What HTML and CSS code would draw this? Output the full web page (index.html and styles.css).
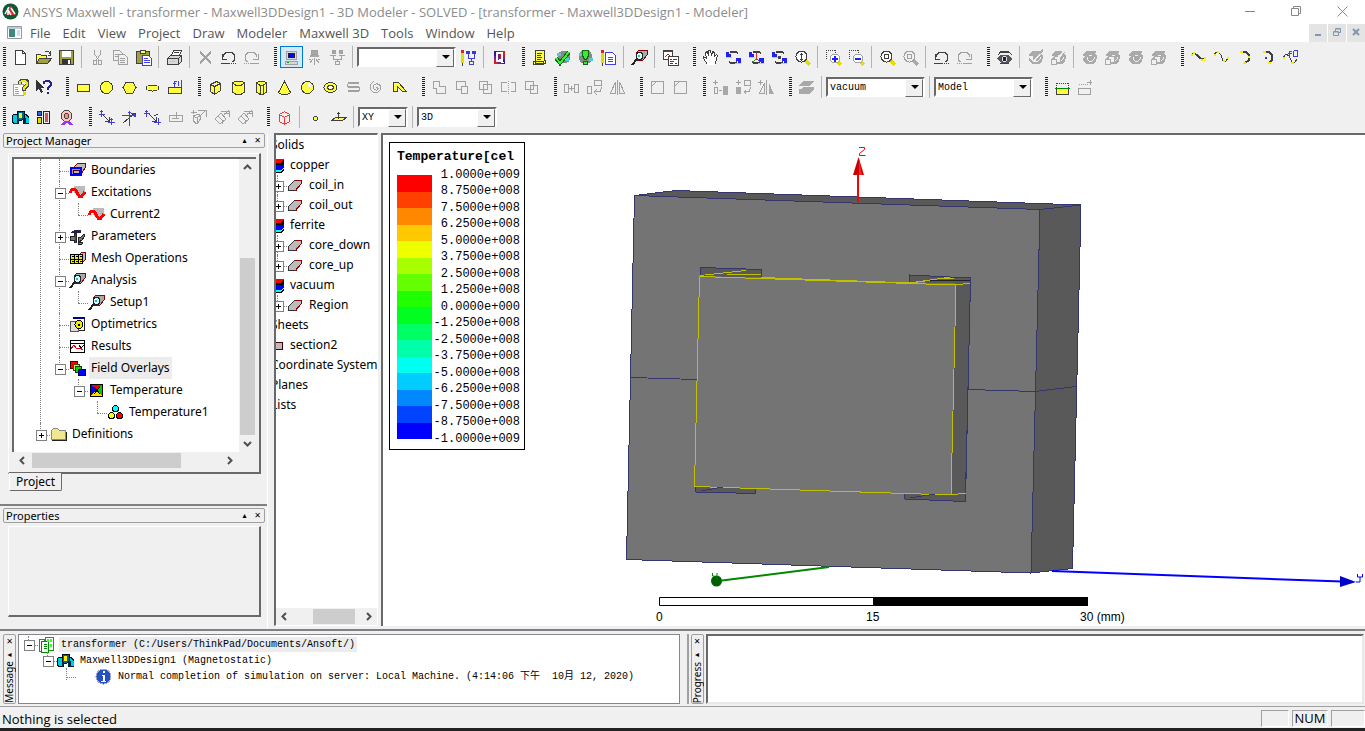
FILE: index.html
```
<!DOCTYPE html>
<html lang="en">
  <head>
    <meta charset="utf-8" />
    <title>ANSYS Maxwell</title>
    <link rel="stylesheet" href="styles.css">
  </head>
  <body>
    <svg class="sprite" aria-hidden="true">
      <defs>
        <!-- file -->
        <g id="new"><path class="w k" d="M3.500 1.500h7l3 3v11h-10zM10.500 1.500v3h3"/></g>
        <g id="open"><path class="y k" d="M1.500 14.500v-9h4l1 1h5v3M1.500 14.500l3-5h12l-4 5z"/><path class="ol k" d="M1.500 14.500l3-5h12l-4 5z"/><path class="k n" d="M9.500 2.500h4l2 3M15.500 2v4h-3"/></g>
        <g id="save"><path class="ol k" d="M1.500 1.500h14v14h-14z"/><path class="w" d="M4 2h9v6H4z"/><path d="M4 10h9v5H4z" fill="#333"/><path class="w" d="M10 11h2v4h-2z"/></g>
        <g id="cut"><path class="g n" d="M5.500 1v4l4 6M11.500 1v4l-4 6M4.500 11.500h3v4h-3zM9.500 11.500h3v4h-3z"/></g>
        <g id="copy"><path class="g l" d="M1.500 1.500h6l3 3v7h-9zM3 5.500h5M3 7.500h5"/><path class="g lo" d="M6.500 5.500h6l3 3v7h-9zM8 9.500h5M8 11.500h5M8 13.500h5"/></g>
        <g id="paste"><path class="ol k" d="M1.500 2.500h13v12h-13z"/><path class="y k" d="M5.500 1.500h5v3h-5z"/><path class="w b" d="M7.500 6.500h6l3 3v7h-9zM9 9.500h4M9 11.500h6M9 13.500h6"/></g>
        <g id="print"><path class="w k" d="M5.500 6.500l2-5h8l-2 5zM8 3.500h5"/><path class="lg k" d="M1.500 9.500l3-3h11v6l-3 3h-11zM1.500 9.500h11v6M12.500 9.500l3-3"/><path d="M4 12h5v1H4z" fill="#dd0"/></g>
        <g id="del"><path class="g n t" d="M3 2.500l11 12M14 2.500l-11 12"/></g>
        <g id="undo"><path class="k n" d="M3.500 8v-2l3-3h5l3 3v5l-2 2M2 5v5h5"/><path class="k n" d="M1 14.500h9M11 14.500h1M13 14.500h1M15 14.500h1"/></g>
        <g id="redo"><path class="g n" d="M13.500 8v-2l-3-3h-5l-3 3v5l2 2M15 5v5h-5"/><path class="g n" d="M1 14.500h1M3 14.500h1M5 14.500h1M7 14.500h9"/></g>
        <!-- run targets -->
        <g id="pc"><path class="lg g" d="M3.500 2.500h10v8h-10zM2.500 12.500h12v3h-12z"/><path d="M5 4h7v5H5z" fill="#222"/><path d="M6 5h5v3H6z" fill="#00f"/><path d="M4 13h2v1H4z" fill="#0a0"/></g>
        <g id="farm"><path class="g gf" d="M5.500 1.500h6v4h-6z"/><path class="gf" d="M4 6h9v2H4z"/><path class="g n" d="M8.500 9v7M7 10l-3 4M10 10l3 4M5 10.500h-2M12 10.500h2"/></g>
        <g id="net"><path class="g gf" d="M3.500 1.500h3v3h-3zM10.500 1.500h3v3h-3z"/><path class="g n" d="M1 6.500h6M10 6.500h6M4.500 7v3h8v-3M8.500 10v3M6.500 12.500h4v3h-4z"/></g>
        <g id="netpen"><path class="bd" d="M6 2h4v3H6zM12 2h4v3h-4z"/><path class="b n" d="M8.500 5v4h6v-4M11.500 9v3M9.500 12.500h4v3h-4z"/><path d="M1 4h3v10H1z" fill="#dd0"/><path d="M1 1h3v3H1z" fill="#d22"/><path class="k n" d="M2.500 14v3"/></g>
        <g id="queue"><path d="M3 2h11v13H3z" fill="#702090"/><path d="M9 2h5v6H9zM3 10h4v5H3z" fill="#c22"/><path d="M3 2h3v5H3zM11 11h3v4h-3z" fill="#228"/><path d="M6 4h5v8H6zM9 10l3 4" fill="none" stroke="#fff" stroke-width="2"/></g>
        <g id="list"><path class="y k" d="M4.500 1.500h9v10h1v3h-10zM2.500 12.500h10v3h-10zM6 4.500h5M6 6.500h4M6 8.500h5M6 10.500h4"/></g>
        <g id="check"><circle cx="10" cy="8" r="6.500" fill="#888"/><path d="M3 4h4v3H3zM11 9h4v3h-4z" fill="#5cc"/><path d="M2 9l4 5l9-11" fill="none" stroke="#161" stroke-width="4"/><path d="M2 9l4 5l9-11" fill="none" stroke="#3e3" stroke-width="2"/></g>
        <g id="bang"><circle cx="8.500" cy="8" r="7" fill="#888"/><path d="M2 4h3v3H2zM12 9h4v3h-4z" fill="#5cc"/><path d="M5.500 1.500h6v5l-2 4h-2l-2-4zM6.500 12.500h4v3h-4z" fill="#3e3" stroke="#161"/></g>
        <g id="notes"><path class="w b" d="M5.500 3.500h7l3 3v9h-10zM8 8.500h5M8 10.500h5M8 12.500h5"/><path d="M1 4h3v10H1z" fill="#dd0"/><path d="M1 1h3v3H1z" fill="#d22"/><path class="k n" d="M2.500 14v3"/></g>
        <g id="analyze"><path d="M5 4l3-3h8v5l-4 5H5z" fill="#aaa" stroke="#800"/><path d="M6 10l-5 6" stroke="#222" stroke-width="2"/><circle cx="8.500" cy="7" r="3.500" fill="#cff" stroke="#222"/><path d="M7 6h2v2H7z" fill="#3bb"/></g>
        <g id="report"><path class="w k" d="M1.500 1.500h9v9h-9z"/><path class="bd" d="M2 2h8v1H2z"/><path d="M3 8l3-3 3 3" fill="none" stroke="#c22"/><path class="w k" d="M6.500 7.500h10v9h-10zM8 10.500h2M11 10.500h4M8 12.500h4M8 14.500h3M13 14.500h2"/></g>
        <!-- view -->
        <g id="hand"><path class="w k" d="M5.500 15.500l-4-6v-2l3 2-1-6 2-1 1 4v-5h2l1 5 1-4 2 1v4l2-2 1 1-2 8-1 1"/></g>
        <g id="spin"><path class="k n t" d="M5 3.500l2-1h4l2 2M4 13l2 1h4l2-1"/><path d="M1 8h6v1H1z" fill="#6ef"/><path d="M1 3h3v2h2v3H1z" fill="#22e"/><path d="M10 14h6v1h-6z" fill="#6ef"/><path d="M11 9h5v5h-3v-2h-2z" fill="#22e"/></g>
        <g id="spinaxis"><use href="#spin"/><path d="M8.500 4v6" stroke="#e22"/><path d="M8.500 10l-4 3" stroke="#0a0"/><path class="b" d="M8.500 10l4 3"/></g>
        <g id="spindot"><use href="#spin"/><path d="M7 7h3v3H7z" fill="#444"/></g>
        <g id="lensud"><use href="#lens"/><path class="k n" d="M7.500 4v8M6 5.500h3M6 10.500h3"/></g>
        <g id="lens"><path d="M11 11l5 5" stroke="#e6dc00" stroke-width="3"/><circle class="w k" cx="7.500" cy="7.500" r="5.500"/></g>
        <g id="zin"><path class="k n dot" d="M1 1.500h9M1.500 1v10M10.500 1v4"/><path d="M12 12l4 4" stroke="#e6dc00" stroke-width="3"/><circle class="w g" cx="10" cy="9.500" r="4.500"/><path d="M7 9h6v2H7zM9 7h2v6H9z" fill="#22e"/></g>
        <g id="zout"><path class="k n dot" d="M1 1.500h9M1.500 1v10M10.500 1v4"/><path d="M12 12l4 4" stroke="#e6dc00" stroke-width="3"/><circle class="w g" cx="10" cy="9.500" r="4.500"/><path d="M7 9h6v2H7z" fill="#22e"/></g>
        <g id="fit"><use href="#lens"/><path class="k n" d="M5.500 5.500h4v4h-4z"/></g>
        <g id="fitoff"><path d="M11 11l5 5" stroke="#aaa" stroke-width="3"/><circle class="n g" cx="7.500" cy="7.500" r="5.500"/><path class="g n" d="M5.500 5.500h4v4h-4z"/></g>
        <g id="eye"><path class="k n" d="M2 5.500l3-2h8l3 2M3 3.500l3-1h7"/><path d="M1 9l4-3h7l4 4-4 4H5z" fill="#555"/><circle cx="8.500" cy="10" r="3" fill="#dde"/><circle cx="8.500" cy="10" r="2" fill="#124"/><path class="k n" d="M4 14.500h9"/></g>
        <g id="eyeoff"><path d="M2 5l3-3h10v2h-2l3 3-1 6-3 2H6l-4-3V9l2-2H2z" fill="#aaa"/><path d="M6 8v2l2 2h3l2-2V8M8 6.500h3" fill="none" stroke="#f0f0f0"/></g>
        <g id="eyechk"><use href="#eyeoff"/><path d="M4 8l3 3 9-10" fill="none" stroke="#f0f0f0" stroke-width="3"/><path d="M6 10l10-9" stroke="#aaa" stroke-width="2"/></g>
        <g id="eyebox"><use href="#eyeoff"/><path d="M4.500 7.500h6v6h-4M1.500 10.500h5v5h-5z" fill="#f0f0f0" stroke="#aaa"/></g>
        <g id="eyeboxchk"><use href="#eyebox"/><path d="M9 8l6-7" stroke="#f0f0f0" stroke-width="2"/></g>
        <!-- curves -->
        <g id="line"><path class="k n" d="M2 5l3-1 7 6 3-1M5 5l7 6"/><path class="yd" d="M1 5h2v2H1zM3 3h2v2H3zM11 10h2v2h-2zM14 8h2v2h-2zM14 11h2v1h-2z"/></g>
        <g id="spline"><path class="k n" d="M1 6l2-3h2l3 3 2 6h3l2-3"/><path class="yd" d="M1 5h2v2H1zM4 2h2v2H4zM10 11h2v2h-2zM14 8h2v2h-2z"/></g>
        <g id="arc3"><path class="k n t" d="M6 3h4l3 3v5l-4 3"/><path class="yd" d="M4 2h3v2H4zM12 7h2v2h-2zM7 13h3v2H7z"/></g>
        <g id="arcc"><path class="k n t" d="M6 3h4l3 3v5l-3 3"/><path class="yd" d="M4 2h3v2H4zM9 13h3v2H9z"/><path class="bd" d="M6 8h2v2H6z"/></g>
        <g id="eqcurve"><path class="k n" d="M1 9l3-4 3 2 3 6h3l2-3"/><path class="yd" d="M1 8h2v2H1zM9 13h3v2H9z"/><path class="b n" d="M7.500 9v-7h2M6 4.500h4M11.500 2v6M12 1.500h3.500v6H12"/></g>
        <!-- help -->
        <g id="help"><path class="w g" d="M1.500 5.500h10v11h-10zM3 8.500h3M3 10.500h3M3 12.500h4M3 14.500h4"/><path d="M8 5V3l2-2h4l2 2v3l-4 3v3" fill="none" stroke="#444" stroke-width="4"/><path d="M8 5V3l2-1h3l2 2v2l-3 3v2" fill="none" stroke="#ee0" stroke-width="2"/><path d="M11 13h3v3h-3z" fill="#dd0"/></g>
        <g id="whats"><path d="M1 1l8 8H6l2 4-2 1-2-4-3 2z" fill="#333"/><path d="M9 5V3l2-1h3l2 2v2l-3 3v2M13 13v2" fill="none" stroke="#229" stroke-width="2"/></g>
        <!-- primitives -->
        <g id="rect"><path class="y k" d="M2.500 5.500h12v7h-12z"/></g>
        <g id="circ"><circle class="y k" cx="8.500" cy="8.500" r="6"/></g>
        <g id="hex"><path class="y k" d="M5 3h7l3 5.500-3 5.500H5L2 8.500z"/></g>
        <g id="ell"><ellipse class="y k" cx="8.500" cy="9" rx="6.500" ry="3"/></g>
        <g id="eqsurf"><path class="y k" d="M1.500 8.500h13v6h-13z"/><path class="b n" d="M7.500 8v-6h2M6 4.500h3M11.500 2v5M14.500 1v7"/></g>
        <g id="box"><path class="y k" d="M3.500 5.500l6-3 4 2v7l-6 4-4-3zM3.500 5.500l4 2 6-3M7.500 7.500v8"/></g>
        <g id="cyl"><path class="y k" d="M2.500 4v9l3 2h6l3-2V4l-3-2h-6zM2.500 4l3 2h6l3-2"/></g>
        <g id="poly"><path class="y k" d="M3.500 4v9l3 2h4l3-2V4l-3-2h-4zM3.500 4l3 2h4l3-2M7.500 6v9M10.500 6v9"/></g>
        <g id="cone"><path class="y k" d="M8.500 2.500l6 11-3 2h-6l-3-2z"/></g>
        <g id="sph"><circle class="y k" cx="8.500" cy="8.500" r="6"/><path class="w" d="M9 4h3v4H9z"/></g>
        <g id="torus"><ellipse class="y k" cx="8.500" cy="8.500" rx="6.500" ry="5"/><ellipse class="w k" cx="8.500" cy="8.500" rx="3" ry="2"/></g>
        <g id="helix"><path class="g n t" d="M3 4h11M3 8h11M3 12h11"/><path class="g n" d="M2.500 5v3M14.500 8v4"/></g>
        <g id="spiral"><path class="g n" d="M8.500 8.500l2 1-2 2-3-2v-3l3-2 4 2v4l-3 3h-4l-3-3v-5l3-3"/></g>
        <g id="bond"><path class="y k" d="M2.500 12.500v-9h5l8 9h-4l-5-5v5z"/></g>
        <!-- booleans and edits -->
        <g id="unite"><path class="g n" d="M2.500 2.500h6v5h6v7h-9v-5h-3z"/></g>
        <g id="sub"><path class="g n" d="M7.500 10.500h-5v-8h9v5M7.500 7.500h6v7h-6z"/></g>
        <g id="inter"><path class="g n" d="M2.500 2.500h8v8h-8zM6.500 5.500h8v9h-8z"/></g>
        <g id="split"><path class="g n" d="M6.500 3.500h-5v9h5M10.500 3.500h5v9h-5"/><path class="g n dot" d="M8.500 2v13"/></g>
        <g id="impr"><path class="g n" d="M2.500 2.500h8v8h-8zM7.500 6.500h7v8h-7z"/></g>
        <g id="move"><path class="g n" d="M1.500 5.500h4v8h-4zM11.500 5.500h4v8h-4zM6 9.500h5M8.500 7v5"/></g>
        <g id="rot"><path class="g n" d="M1.500 7.500h4v7h-4zM8.500 1.500h7v5h-7zM15.500 8l-1 4-5 1M11 10l-3 3 3 3"/></g>
        <g id="mirror"><path class="g n" d="M6.500 3v11h-5zM10.500 3v11h5z"/><path class="g n" d="M8.500 1v15"/></g>
        <g id="fillet"><path class="g n" d="M2.500 14.500v-12h12v12zM2.500 7.500l5-5"/></g>
        <g id="dupmove"><path class="g n" d="M1 3.500h5M3.500 1v5M2.500 8.500h3v6h-3zM7 11.500h3"/><path class="gf" d="M11 7h5v9h-5z"/></g>
        <g id="duprot"><path class="g n" d="M1 3.500h5M3.500 1v5M9.500 1.500h6v5h-6zM15.500 8l-1 4-5 1"/><path class="gf" d="M1 8h5v7H1zM8 13l3-3v6z"/></g>
        <g id="dupmir"><path class="g n" d="M0 3.500h5M2.500 1v5M6.500 4v10h-5zM8.500 1v15"/><path class="gf" d="M11 4l5 11h-5z"/></g>
        <g id="sheets"><path class="gf" d="M5 2h11l-4 5H1zM1 10h2l2-2h11v2l-4 5H1z"/></g>
        <g id="section"><path class="k n dot" d="M3 4.500h11M2.500 4v5M14.500 4v5"/><path class="y k" d="M2.500 9.500h12v6h-12z"/><path d="M1 9.500h15" stroke="#080"/></g>
        <g id="sectadd"><path class="g n dot" d="M2 5.500h9"/><path class="g n" d="M1.500 9.500h12v6h-12zM10 3.500h5M13.500 1v5"/></g>
        <!-- solver and coordinate systems -->
        <g id="maxwell"><path d="M2 5h3v9l-3 1-2-3V7zM11 5h3l3 4v5l-3 1z" fill="#0cd" stroke="#012"/><path d="M5 2h7v7l-2 2H7L5 9z" fill="#068" stroke="#012"/><path d="M7 4h3v5H7z" fill="#fe0"/><path d="M5 10h2v5H5zM11 9h3v6h-3z" fill="#024"/></g>
        <g id="materials"><path d="M2.500 2.500h4v4h-4z" fill="#36c" stroke="#222"/><path d="M2.500 8.500h4v6h-4z" fill="#dd0" stroke="#222"/><path d="M8.500 2.500h6v12h-6z" fill="#eee" stroke="#222"/><path d="M10 4h3v9h-3z" fill="#c55"/></g>
        <g id="boundary"><circle cx="8.500" cy="7" r="5.500" fill="#fbc8b8" stroke="#444"/><circle cx="8.500" cy="7" r="2.500" fill="#f88" stroke="#444"/><path d="M2 16l4-4h5l4 4h-4l-2-2-3 2z" fill="#93f"/></g>
        <g id="cs1"><path class="k n" d="M5 6l6 6M11 8v4h-4"/><path class="b n" d="M1 5.500h6M3.500 1v7M2 2.500h3M10 13.500h7M13.500 9v7M12 10.500h3"/></g>
        <g id="cs2"><path class="k n" d="M2 14l12-10M10 4h4v4"/><path class="b n" d="M1 6.500h14M8.500 2v15M7 3.500h3M13.500 5v3"/></g>
        <g id="cs3"><path class="k n" d="M5 5l7 7M12 8v4h-4M10 7l4-2"/><path class="b n" d="M0 4.500h6M2.500 1v7M1 2.500h3M10 13.500h7M14.500 9v7"/></g>
        <g id="cs4"><path class="g n" d="M2.500 6.500h13v6h-13zM9.500 3v6M5 9.500h7"/></g>
        <g id="cs5"><path class="g n" d="M1 3.500h6M3.500 1v4M8 1.500h8v6M16 1l-6 6M3 7l6-2 2 4-4 6-4-3zM3 7l4 2 4-3M7 9v6"/></g>
        <g id="cs6"><path class="g n" d="M8 2h8v6M16 1l-6 6M2 10l6-6 5 6-6 5-5-5M5 7l4 4v4M16 4h-5"/></g>
        <g id="redbox"><path d="M3.500 5.500l5-3 5 3v7l-5 3-5-3zM3.500 5.500l5 3 5-3M8.500 8v7" fill="none" stroke="#f33"/></g>
        <g id="point"><path class="y k" d="M6.500 8.500l1-1h2l1 1v2l-1 1h-2l-1-1z"/></g>
        <g id="plane"><path class="y k" d="M1.500 11.500l4-3h11l-4 3zM8.500 10v-7M7 4.500h3"/></g>
        <!-- tree -->
        <g id="t-bound"><path d="M5 5l4-4h7v5l-4 6" fill="#bbb" stroke="#800"/><path d="M2 6h10v7H2z" fill="#c88" stroke="#00f" stroke-width="2"/><path d="M4 8h6v3H4z" fill="#bbb" stroke="#400"/></g>
        <g id="t-exc"><path d="M5 2h11v8l-4 4-7-5z" fill="#bbb"/><path d="M1 9l2-4h3l4 7h3l3-4" fill="none" stroke="#f00" stroke-width="3"/></g>
        <g id="t-param"><path d="M2 4l4-2h6v3H8v10H5V5H2z" fill="#224"/><path d="M1 8h6v4H1zM9 9h3l3-3 1 2-3 4-3 2 4 1-1 1H9z" fill="#777" stroke="#222"/><path d="M6 6h1v9H6z" fill="#33c"/></g>
        <g id="t-mesh"><path d="M10 5l3-3h3v8l-3 3" fill="#bbb" stroke="#800"/><path d="M1.500 4.500h12v9h-12z" fill="#ee0" stroke="#000"/><path d="M5.500 4v9M9.500 4v9M2 9.500h11M3 6h1v1M7 6h1v1M11 6h1v1M3 11h1v1M7 11h1v1M11 11h1v1" fill="none" stroke="#000"/></g>
        <g id="t-opt"><path d="M4 1.500h11.500v13H8" fill="#fff" stroke="#222"/><path d="M4 1h12v2H4z" fill="#008"/><path d="M1.500 5.500h8v10h-8z" fill="#ddd" stroke="#555"/><circle cx="10" cy="8.500" r="4" fill="#ee0" stroke="#000"/><path d="M9 8h2v2H9z"/></g>
        <g id="t-res"><path d="M1.500 2.500h14v12h-14z" fill="#fff" stroke="#000"/><path d="M2 5.500h13" stroke="#000"/><path d="M2 11l3-4 3 4 3-1 3 2" fill="none" stroke="#d00"/><path d="M10 7l2 3 3-3" fill="none" stroke="#000"/></g>
        <g id="t-field"><path d="M1.500 1.500h7v7h-7z" fill="#f00" stroke="#400"/><path d="M4.500 4.500h6v6h-6z" fill="#ee0" stroke="#440"/><path d="M6.500 6.500h6v6h-6z" fill="#0d0" stroke="#040"/><path d="M9.500 9.500h7v6h-7z" fill="#00f" stroke="#004"/></g>
        <g id="t-temp"><path d="M3 3h11v11H3z" fill="#00f"/><path d="M3 3h11l-5 5z" fill="#f00"/><path d="M14 3v11L8 8z" fill="#0c0"/><path d="M3 14h11L8 8z" fill="#fd0"/><path d="M2.500 2.500h12v12h-12zM6 5l6 7M12 5l-6 7" fill="none" stroke="#000"/></g>
        <g id="t-plot"><g stroke="#000"><circle cx="8.500" cy="4.500" r="3" fill="#0ff"/><circle cx="4.500" cy="11.500" r="3" fill="#ff0"/><circle cx="12.500" cy="11.500" r="3" fill="#f00"/></g></g>
        <g id="t-dir"><path d="M1.500 13.500v-9l2-2h4l2 2h6v9z" fill="#f0e890" stroke="#888"/><path d="M2 14.500h14.500V6" fill="none" stroke="#222"/></g>
        <g id="t-mat"><path d="M4 2h12v3l-3 3H1V6z" fill="#000"/><path d="M4 2h12l-4 4H1z" fill="#f00"/><path d="M1 8h12l3-1v3l-3 3H1z" fill="#00f"/><path d="M13 8l3-2M1 7.500h12M1 15.500h12l3-3" fill="none" stroke="#000"/><path d="M1 13h12v2H1z" fill="#0ff"/></g>
        <g id="t-solid"><path d="M1.500 9.500l6-6h7v3l-6 7h-7z" fill="#bbb" stroke="#333"/><path d="M8 3.500h6.500v3l-5 5v2" fill="none" stroke="#800"/></g>
        <g id="t-sheet"><path d="M4.500 5.500h10v7h-10z" fill="#bbb" stroke="#400"/></g>
        <g id="t-proj"><path d="M7.500 1.500h8v13h-8zM1.500 3.500h5v12h-5z" fill="#fff" stroke="#0a0"/><path d="M3.500 5.500h7v11h-7zM6 8.500h3M6 10.500h3M6 12.500h3" fill="#fff" stroke="#080"/><path d="M9 3h2v3H9zM12 3h2v3h-2zM12 8h2v3h-2z" fill="#3f3"/></g>
      </defs>
    </svg>

    <header class="titlebar">
      <svg class="logo" viewBox="0 0 17 17"><circle cx="8.500" cy="8.500" r="8" fill="#0a5a32"/><path d="M4 12l4-9 2 1 4 8" fill="#c33"/><path d="M3 11l4-7M6 12V7l3 5M9 5l4 6" stroke="#fff" stroke-width="1.500" fill="none"/></svg>
      <h1>ANSYS Maxwell - transformer - Maxwell3DDesign1 - 3D Modeler - SOLVED - [transformer - Maxwell3DDesign1 - Modeler]</h1>
      <div class="caption">
        <button title="Minimize"><svg viewBox="0 0 11 11"><path d="M0 5.500h10"/></svg></button>
        <button title="Restore"><svg viewBox="0 0 11 11"><path d="M.5 2.500h7v7h-7zM2.500 2v-1.500h7v7H8"/></svg></button>
        <button title="Close"><svg viewBox="0 0 11 11"><path d="M.5.500l10 10M10.500.500l-10 10"/></svg></button>
      </div>
    </header>

    <nav class="menubar">
      <svg class="docicon" viewBox="0 0 15 13"><path d="M.5.500h14v12H.5z" fill="#fff" stroke="#999"/><path d="M1 1h13v2H1z" fill="#bcd"/><path d="M2 3h6v8H2z" fill="#3a8a80"/><path d="M10 4h3v6h-3z" fill="#cde"/></svg>
      <button>File</button>
      <button>Edit</button>
      <button>View</button>
      <button>Project</button>
      <button>Draw</button>
      <button>Modeler</button>
      <button>Maxwell 3D</button>
      <button>Tools</button>
      <button>Window</button>
      <button>Help</button>
      <div class="mdi">
        <button title="Minimize"><svg viewBox="0 0 9 9"><path d="M1 7h6"/></svg></button>
        <button title="Restore"><svg class="thin" viewBox="0 0 9 9"><path d="M.5 3.500h5v4h-5zM2.500 3V.500h5v4H6M1 4h4M3 1h5"/></svg></button>
        <button title="Close"><svg viewBox="0 0 9 9"><path d="M1 1l6 6M7 1l-6 6"/></svg></button>
      </div>
    </nav>

    <div class="toolbars">
      <div class="bar-row">
        <div class="bar">
          <button title="New"><svg><use href="#new"/></svg></button>
          <button title="Open"><svg><use href="#open"/></svg></button>
          <button title="Save"><svg><use href="#save"/></svg></button>
          <i></i>
          <button title="Cut"><svg><use href="#cut"/></svg></button>
          <button title="Copy"><svg><use href="#copy"/></svg></button>
          <button title="Paste"><svg><use href="#paste"/></svg></button>
          <i></i>
          <button title="Print"><svg><use href="#print"/></svg></button>
          <i></i>
          <button title="Delete"><svg><use href="#del"/></svg></button>
          <button title="Undo"><svg><use href="#undo"/></svg></button>
          <button title="Redo"><svg><use href="#redo"/></svg></button>
        </div>
        <div class="bar">
          <button class="on" title="Local"><svg><use href="#pc"/></svg></button>
          <button title="Remote"><svg><use href="#farm"/></svg></button>
          <button title="Distributed"><svg><use href="#net"/></svg></button>
          <i></i>
          <span class="combo"><select aria-label="Machine"><option></option></select></span>
          <button title="Edit machines"><svg><use href="#netpen"/></svg></button>
          <i></i>
          <button title="Queue"><svg><use href="#queue"/></svg></button>
        </div>
        <div class="bar">
          <button title="List"><svg><use href="#list"/></svg></button>
          <button title="Validate"><svg><use href="#check"/></svg></button>
          <button title="Analyze all"><svg><use href="#bang"/></svg></button>
          <button title="Edit notes"><svg><use href="#notes"/></svg></button>
          <i></i>
          <button title="Solution data"><svg><use href="#analyze"/></svg></button>
          <i></i>
          <button title="Copy report"><svg><use href="#report"/></svg></button>
        </div>
        <div class="bar">
          <button title="Pan"><svg><use href="#hand"/></svg></button>
          <button title="Rotate"><svg><use href="#spin"/></svg></button>
          <button title="Rotate about axis"><svg><use href="#spinaxis"/></svg></button>
          <button title="Rotate about center"><svg><use href="#spindot"/></svg></button>
          <button title="Zoom"><svg><use href="#lensud"/></svg></button>
          <i></i>
          <button title="Zoom in"><svg><use href="#zin"/></svg></button>
          <button title="Zoom out"><svg><use href="#zout"/></svg></button>
          <i></i>
          <button title="Fit all"><svg><use href="#fit"/></svg></button>
          <button title="Fit selection"><svg><use href="#fitoff"/></svg></button>
          <i></i>
          <button title="Undo view"><svg><use href="#undo"/></svg></button>
          <button title="Redo view"><svg><use href="#redo"/></svg></button>
        </div>
        <div class="bar">
          <button title="Visibility"><svg><use href="#eye"/></svg></button>
          <i></i>
          <button title="Hide selection"><svg><use href="#eyechk"/></svg></button>
          <button title="Hide in view"><svg><use href="#eyeboxchk"/></svg></button>
          <i></i>
          <button title="Show selection"><svg><use href="#eyeoff"/></svg></button>
          <button title="Show in view"><svg><use href="#eyebox"/></svg></button>
          <button title="Show all"><svg><use href="#eyeoff"/></svg></button>
          <button title="Show all in view"><svg><use href="#eyebox"/></svg></button>
        </div>
        <div class="bar">
          <button title="Line"><svg><use href="#line"/></svg></button>
          <button title="Spline"><svg><use href="#spline"/></svg></button>
          <button title="3 point arc"><svg><use href="#arc3"/></svg></button>
          <button title="Center point arc"><svg><use href="#arcc"/></svg></button>
          <button title="Equation curve"><svg><use href="#eqcurve"/></svg></button>
        </div>
      </div>

      <div class="bar-row">
        <div class="bar">
          <button title="Help"><svg><use href="#help"/></svg></button>
          <button title="What's this"><svg><use href="#whats"/></svg></button>
        </div>
        <div class="bar">
          <button title="Rectangle"><svg><use href="#rect"/></svg></button>
          <button title="Circle"><svg><use href="#circ"/></svg></button>
          <button title="Polygon"><svg><use href="#hex"/></svg></button>
          <button title="Ellipse"><svg><use href="#ell"/></svg></button>
          <button title="Equation surface"><svg><use href="#eqsurf"/></svg></button>
        </div>
        <div class="bar">
          <button title="Box"><svg><use href="#box"/></svg></button>
          <button title="Cylinder"><svg><use href="#cyl"/></svg></button>
          <button title="Polyhedron"><svg><use href="#poly"/></svg></button>
          <button title="Cone"><svg><use href="#cone"/></svg></button>
          <button title="Sphere"><svg><use href="#sph"/></svg></button>
          <button title="Torus"><svg><use href="#torus"/></svg></button>
          <button title="Helix"><svg><use href="#helix"/></svg></button>
          <button title="Spiral"><svg><use href="#spiral"/></svg></button>
          <button title="Bondwire"><svg><use href="#bond"/></svg></button>
        </div>
        <div class="bar">
          <button title="Unite"><svg><use href="#unite"/></svg></button>
          <button title="Subtract"><svg><use href="#sub"/></svg></button>
          <button title="Intersect"><svg><use href="#inter"/></svg></button>
          <button title="Split"><svg><use href="#split"/></svg></button>
          <button title="Imprint"><svg><use href="#impr"/></svg></button>
        </div>
        <div class="bar">
          <button title="Move"><svg><use href="#move"/></svg></button>
          <button title="Rotate object"><svg><use href="#rot"/></svg></button>
          <button title="Mirror"><svg><use href="#mirror"/></svg></button>
        </div>
        <div class="bar">
          <button title="Fillet"><svg><use href="#fillet"/></svg></button>
          <button title="Chamfer"><svg><use href="#fillet"/></svg></button>
        </div>
        <div class="bar">
          <button title="Duplicate along line"><svg><use href="#dupmove"/></svg></button>
          <button title="Duplicate around axis"><svg><use href="#duprot"/></svg></button>
          <button title="Duplicate mirror"><svg><use href="#dupmir"/></svg></button>
        </div>
        <div class="bar">
          <button title="Thicken sheet"><svg><use href="#sheets"/></svg></button>
          <i></i>
          <span class="combo"><select aria-label="Material"><option>vacuum</option></select></span>
          <i></i>
          <span class="combo"><select aria-label="Selection"><option>Model</option></select></span>
        </div>
        <div class="bar">
          <button title="Section"><svg><use href="#section"/></svg></button>
          <button title="Add section"><svg><use href="#sectadd"/></svg></button>
        </div>
      </div>

      <div class="bar-row">
        <div class="bar">
          <button title="Maxwell 3D"><svg><use href="#maxwell"/></svg></button>
          <button title="Materials"><svg><use href="#materials"/></svg></button>
          <button title="Boundaries"><svg><use href="#boundary"/></svg></button>
        </div>
        <div class="bar">
          <button title="Relative CS offset"><svg><use href="#cs1"/></svg></button>
          <button title="Relative CS rotated"><svg><use href="#cs2"/></svg></button>
          <button title="Relative CS both"><svg><use href="#cs3"/></svg></button>
          <button title="Face CS"><svg><use href="#cs4"/></svg></button>
          <button title="Object CS offset"><svg><use href="#cs5"/></svg></button>
          <button title="Object CS rotated"><svg><use href="#cs6"/></svg></button>
          <button title="Object CS both"><svg><use href="#cs6"/></svg></button>
        </div>
        <div class="bar">
          <button title="Region"><svg><use href="#redbox"/></svg></button>
          <i></i>
          <button title="Point"><svg><use href="#point"/></svg></button>
          <button title="Plane"><svg><use href="#plane"/></svg></button>
          <i></i>
          <span class="combo plane"><select aria-label="Drawing plane"><option>XY</option></select></span>
          <i></i>
          <span class="combo mode"><select aria-label="Movement mode"><option>3D</option></select></span>
        </div>
      </div>
    </div>

    <main>
      <aside>
        <section class="panel project">
          <h2>Project Manager <button title="Hide">&#9652;</button><button title="Close">&#10005;</button></h2>
          <div class="frame">
            <div class="scroller">
              <ul class="tree">
                <li>
                  <ul>
                    <li><div><b></b><svg><use href="#t-bound"/></svg><span>Boundaries</span></div></li>
                    <li><div><b class="minus"></b><svg><use href="#t-exc"/></svg><span>Excitations</span></div>
                      <ul>
                        <li><div><b></b><svg><use href="#t-exc"/></svg><span>Current2</span></div></li>
                      </ul>
                    </li>
                    <li><div><b class="plus"></b><svg><use href="#t-param"/></svg><span>Parameters</span></div></li>
                    <li><div><b></b><svg><use href="#t-mesh"/></svg><span>Mesh Operations</span></div></li>
                    <li><div><b class="minus"></b><svg><use href="#analyze"/></svg><span>Analysis</span></div>
                      <ul>
                        <li><div><b></b><svg><use href="#analyze"/></svg><span>Setup1</span></div></li>
                      </ul>
                    </li>
                    <li><div><b></b><svg><use href="#t-opt"/></svg><span>Optimetrics</span></div></li>
                    <li><div><b></b><svg><use href="#t-res"/></svg><span>Results</span></div></li>
                    <li><div><b class="minus"></b><svg><use href="#t-field"/></svg><span class="sel">Field Overlays</span></div>
                      <ul>
                        <li><div><b class="minus"></b><svg><use href="#t-temp"/></svg><span>Temperature</span></div>
                          <ul>
                            <li><div><b></b><svg><use href="#t-plot"/></svg><span>Temperature1</span></div></li>
                          </ul>
                        </li>
                      </ul>
                    </li>
                  </ul>
                </li>
                <li><div><b class="plus"></b><svg><use href="#t-dir"/></svg><span>Definitions</span></div></li>
              </ul>
              <div class="vbar">
                <svg viewBox="0 0 9 9"><path d="M1 6l3.500-3.500L8 6"/></svg>
                <div class="thumb"></div>
                <svg viewBox="0 0 9 9"><path d="M1 3l3.500 3.500L8 3"/></svg>
              </div>
            </div>
            <div class="hbar">
              <svg viewBox="0 0 9 9"><path d="M6 1L2.500 4.500L6 8"/></svg>
              <div class="track"><div class="thumb"></div></div>
              <svg viewBox="0 0 9 9"><path d="M3 1l3.500 3.500L3 8"/></svg>
            </div>
          </div>
          <button class="tab">Project</button>
        </section>
        <section class="panel props">
          <h2>Properties <button title="Hide">&#9652;</button><button title="Close">&#10005;</button></h2>
          <div class="frame"></div>
        </section>
      </aside>

      <div class="model-tree">
        <ul class="tree">
          <li><div><b></b><svg></svg><span>Solids</span></div>
            <ul>
              <li><div><b class="minus"></b><svg><use href="#t-mat"/></svg><span>copper</span></div>
                <ul>
                  <li><div><b class="plus"></b><svg><use href="#t-solid"/></svg><span>coil_in</span></div></li>
                  <li><div><b class="plus"></b><svg><use href="#t-solid"/></svg><span>coil_out</span></div></li>
                </ul>
              </li>
              <li><div><b class="minus"></b><svg><use href="#t-mat"/></svg><span>ferrite</span></div>
                <ul>
                  <li><div><b class="plus"></b><svg><use href="#t-solid"/></svg><span>core_down</span></div></li>
                  <li><div><b class="plus"></b><svg><use href="#t-solid"/></svg><span>core_up</span></div></li>
                </ul>
              </li>
              <li><div><b class="minus"></b><svg><use href="#t-mat"/></svg><span>vacuum</span></div>
                <ul>
                  <li><div><b class="plus"></b><svg><use href="#t-solid"/></svg><span>Region</span></div></li>
                </ul>
              </li>
            </ul>
          </li>
          <li><div><b></b><svg></svg><span>Sheets</span></div>
            <ul>
              <li><div><b></b><svg><use href="#t-sheet"/></svg><span>section2</span></div></li>
            </ul>
          </li>
          <li><div><b></b><svg></svg><span>Coordinate Systems</span></div></li>
          <li><div><b></b><svg></svg><span>Planes</span></div></li>
          <li><div><b></b><svg></svg><span>Lists</span></div></li>
        </ul>
        <div class="hbar">
          <svg viewBox="0 0 9 9"><path d="M6 1L2.500 4.500L6 8"/></svg>
          <div class="track"><div class="thumb"></div></div>
          <svg viewBox="0 0 9 9"><path d="M3 1l3.500 3.500L3 8"/></svg>
        </div>
      </div>

      <div class="view">
        <svg class="scene" viewBox="383 135 982 490" preserveAspectRatio="xMinYMin meet">
          <!-- core -->
          <path class="side edge" d="M634.500 195.500L676 190.500L1081 205L1040 209.500z"/>
          <path class="side edge" d="M1040 209.500L1081 205L1072.500 568.500L1031 573z"/>
          <path class="front edge" d="M634.500 195.500L1040 209.500L1031 573L626.500 559.500z"/>
          <path class="edge" d="M630.500 377.500L697 379.500M968 389.500L1035 391.500L1076 386.500"/>
          <!-- window and coil -->
          <path class="side edge" d="M700.500 276v-8.500l61 2v8M909.500 282v-7l61 3v6"/>
          <path class="side edge" d="M970.500 278L965.500 501.500L904.500 499v-9M695.500 486v6l60 1.500v-6"/>
          <path class="side" d="M956 285l14-2-5 211-14 2z"/>
          <path class="front coil" d="M699.500 276.500L956 285L951 495L694.500 486.500z"/>
          <path class="coil" d="M700 275.500L746 270.500M727 274h34M761 277.500L912 283M912 283l38-6M956 285l14-2M951 495l15-2M909 283l35-5h10"/>
          <path d="M930 280.500h40" stroke="#222"/>
          <path class="edge" d="M970.500 282L965.500 493M701 491l22-4M910 498l25-4"/>
          <!-- axes -->
          <path d="M858 202V172" stroke="#f00" stroke-width="2"/>
          <path d="M858.500 157l5.500 18h-11z" fill="#c00"/><path d="M859 159l3 16h-3z" fill="#f22"/>
          <path d="M859 147.500h5.500v2l-5 4v2h6" fill="none" stroke="#f00"/>
          <path d="M722 580.500L829 567" stroke="#080" stroke-width="2"/>
          <circle cx="716.500" cy="581" r="5.500" fill="#005f00"/><path d="M712.500 573v3h2M717 573v6" stroke="#080" fill="none"/>
          <path d="M1052 571L1342 581.500" stroke="#00f" stroke-width="2"/>
          <path d="M1340 576l16 6-16 5z" fill="#00c"/><path d="M1357.500 574v3h5v-3M1360 577v5h-4" stroke="#00f" fill="none"/>
          <!-- scale -->
          <path d="M659.500 597.500h428v8h-428z" fill="#fff" stroke="#000"/>
          <path d="M873 597h215v9H873z"/>
          <text x="656" y="621">0</text><text x="866" y="621">15</text><text x="1080" y="621">30 (mm)</text>
        </svg>
        <div class="legend">
          <h3>Temperature[cel</h3>
          <div class="scale">
            <div class="swatches">
              <i style="background: #f00"></i>
              <i style="background: #ff4000"></i>
              <i style="background: #ff8800"></i>
              <i style="background: #ffc800"></i>
              <i style="background: #f0ff00"></i>
              <i style="background: #a8ff00"></i>
              <i style="background: #64ff00"></i>
              <i style="background: #20ff00"></i>
              <i style="background: #00ff20"></i>
              <i style="background: #00ff64"></i>
              <i style="background: #00ffa8"></i>
              <i style="background: #00fff0"></i>
              <i style="background: #00ccff"></i>
              <i style="background: #0088ff"></i>
              <i style="background: #0044ff"></i>
              <i style="background: #00f"></i>
            </div>
            <ol>
              <li>1.0000e+009</li>
              <li>8.7500e+008</li>
              <li>7.5000e+008</li>
              <li>6.2500e+008</li>
              <li>5.0000e+008</li>
              <li>3.7500e+008</li>
              <li>2.5000e+008</li>
              <li>1.2500e+008</li>
              <li>0.0000e+000</li>
              <li>-1.2500e+008</li>
              <li>-2.5000e+008</li>
              <li>-3.7500e+008</li>
              <li>-5.0000e+008</li>
              <li>-6.2500e+008</li>
              <li>-7.5000e+008</li>
              <li>-8.7500e+008</li>
              <li>-1.0000e+009</li>
            </ol>
          </div>
        </div>
      </div>
    </main>

    <div class="docks">
      <section class="dock">
        <h2><button title="Close">&#10005;</button><button title="Hide">&#9666;</button><span>Message</span></h2>
        <div class="messages">
          <ul class="tree">
            <li><div><b class="minus"></b><svg><use href="#t-proj"/></svg><span class="sel">transformer (C:/Users/ThinkPad/Documents/Ansoft/)</span></div>
              <ul>
                <li><div><b class="minus"></b><svg><use href="#maxwell"/></svg><span>Maxwell3DDesign1 (Magnetostatic)</span></div>
                  <ul>
                    <li class="info"><div><b></b><svg viewBox="0 0 17 17"><circle cx="8.500" cy="8.500" r="7.500" fill="#2450c0" stroke="#aab"/><path d="M7.500 3h2v2h-2zM7 7h3v6h1v1H6v-1h1.500V8H7z" fill="#fff"/></svg><span>Normal completion of simulation on server: Local Machine. (4:14:06 下午&nbsp; 10月 12, 2020)</span></div></li>
                  </ul>
                </li>
              </ul>
            </li>
          </ul>
        </div>
      </section>
      <section class="dock">
        <h2><button title="Close">&#10005;</button><button title="Hide">&#9666;</button><span>Progress</span></h2>
        <div class="progress"></div>
      </section>
    </div>

    <footer>
      <span>Nothing is selected</span>
      <div class="cell"></div>
      <div class="cell num">NUM</div>
      <div class="cell last"></div>
    </footer>
  </body>
</html>
```
FILE: styles.css
```
* {
  box-sizing: border-box;
}

body {
  margin: 0;
  height: 100vh;
  display: flex;
  flex-direction: column;
  overflow: hidden;
  background-color: #f0f0f0;
  font: 12px/16px "Noto Sans", "Noto Sans CJK SC", sans-serif;
  color: #000;
}

h1,
h2,
h3,
ul,
ol {
  margin: 0;
  padding: 0;
  font-weight: normal;
  list-style: none;
}

button {
  margin: 0;
  padding: 0;
  border: none;
  background: none;
  font: inherit;
  color: inherit;
}

.sprite {
  position: absolute;
  width: 0;
  height: 0;
}

/* icon paints */
.k { stroke: #404040; }
.g { stroke: #a0a0a0; }
.b { stroke: #4040e0; }
.w { fill: #fff; }
.y { fill: #ffff40; }
.yd { fill: #f4f000; }
.bd { fill: #3838d8; }
.ol { fill: #a0a040; }
.lg { fill: #d8d8d8; }
.lo { fill: #f0f0f0; }
.gf { fill: #a8a8a8; }
.n, .l { fill: none; }
.t { stroke-width: 2; }
.dot { stroke-dasharray: 1 1; }

/* title and menu */
.titlebar {
  display: flex;
  align-items: center;
  height: 23px;
  padding-left: 2px;
  background-color: #fff;
}

.logo {
  width: 17px;
  height: 17px;
  margin-right: 4px;
}

h1 {
  flex: 1;
  font: 13px/16px "Open Sans", sans-serif;
  color: #8c8c8c;
  white-space: nowrap;
}

.caption {
  display: flex;
}

.caption button {
  width: 46px;
  height: 20px;
}

.caption svg {
  display: block;
  width: 11px;
  height: 11px;
  margin: auto;
  fill: none;
  stroke: #888;
}

.menubar {
  display: flex;
  align-items: center;
  height: 19px;
  padding-left: 7px;
  background-color: #fff;
  font: 13px/16px "Open Sans", sans-serif;
  color: #555;
}

.menubar > button {
  padding: 0 6px;
}

.docicon {
  width: 15px;
  height: 13px;
  margin-right: 2px;
}

.mdi {
  display: flex;
  gap: 1px;
  margin-left: auto;
}

.mdi button {
  width: 18px;
  height: 18px;
  background-color: #e4e4e4;
}

.mdi svg {
  display: block;
  width: 9px;
  height: 9px;
  margin: auto;
  fill: none;
  stroke: #8496ac;
  stroke-width: 2;
}

.mdi svg.thin {
  stroke-width: 1;
}

/* toolbars */
.toolbars {
  height: 91px;
  padding-bottom: 1px;
}

.bar-row {
  display: flex;
  gap: 11px;
  height: 30px;
  padding-left: 3px;
}

.bar {
  display: flex;
  align-items: center;
}

.bar::before {
  content: "";
  width: 3px;
  height: 20px;
  margin-right: 3px;
  background: repeating-linear-gradient(#222 0 1px, #f0f0f0 1px 2px);
}

.bar button {
  width: 23px;
  height: 22px;
}

.bar button.on {
  border: 1px solid #0078d7;
  background-color: #d4e8f8;
}

.bar button svg,
.tree svg {
  display: block;
  width: 17px;
  height: 17px;
  margin: auto;
  shape-rendering: crispEdges;
}

.bar i {
  width: 1px;
  height: 22px;
  margin: 0 4px 0 3px;
  background-color: #b4b4b4;
}

.combo {
  position: relative;
  width: 99px;
  margin-right: 1px;
}

.combo.plane {
  width: 50px;
}

.combo.mode {
  width: 80px;
}

.combo select {
  display: block;
  appearance: none;
  width: 100%;
  height: 20px;
  padding: 0 2px;
  border: 2px solid #696969;
  border-right-color: #fff;
  border-bottom-color: #fff;
  border-radius: 0;
  background-color: #fff;
  font: 10px "Liberation Mono", monospace;
  color: #000;
}

.combo::before,
.combo::after {
  content: "";
  position: absolute;
  pointer-events: none;
}

.combo::before {
  top: 2px;
  right: 2px;
  width: 16px;
  height: 16px;
  border: 1px solid #fff;
  border-right-color: #696969;
  border-bottom-color: #696969;
  background-color: #f0f0f0;
}

.combo::after {
  top: 8px;
  right: 6px;
  border: 4px solid transparent;
  border-top-color: #000;
  border-bottom: none;
}

/* workspace */
main {
  flex: 1;
  min-height: 0;
  display: flex;
}

aside {
  display: flex;
  flex-direction: column;
  width: 268px;
  margin-right: 6px;
  border-right: 1px solid #fff;
}

.panel {
  display: flex;
  flex-direction: column;
  padding: 0 2px 0 3px;
}

.project {
  flex: 1;
  min-height: 0;
  border-bottom: 2px solid #808080;
}

.props {
  height: 123px;
  padding-top: 2px;
  padding-bottom: 12px;
}

.panel h2 {
  display: flex;
  flex: none;
  align-items: center;
  height: 15px;
  padding-left: 2px;
  border: 1px solid #a0a0a0;
  border-radius: 2px;
  font-size: 11px;
  line-height: 12px;
}

.panel h2 button {
  width: 13px;
  font: bold 8px "DejaVu Sans", sans-serif;
}

.panel h2 button:first-of-type {
  margin-left: auto;
}

.frame {
  flex: 1;
  display: flex;
  flex-direction: column;
  min-height: 0;
  margin: 5px 4px 0 5px;
  border: 1px solid #fff;
  border-right: 2px solid #696969;
  border-bottom: 2px solid #696969;
}

.project .frame {
  padding: 3px;
}

.props .frame {
  margin-top: 3px;
}

.scroller {
  flex: 1;
  display: flex;
  min-height: 0;
  border-top: 2px solid #696969;
  border-left: 2px solid #696969;
  background-color: #fff;
}

.scroller .tree {
  flex: 1;
  padding-left: 17px;
}

.tab {
  align-self: flex-start;
  height: 18px;
  margin: -1px 0 13px 6px;
  padding: 0 6px;
  border: 1px solid #696969;
  border-top: none;
  border-left-color: #fff;
  border-radius: 0 0 2px 2px;
  background-color: #f0f0f0;
}

.vbar,
.hbar {
  display: flex;
  background-color: #f0f0f0;
}

.vbar {
  flex-direction: column;
  align-items: center;
  width: 17px;
  padding: 4px 1px;
}

.hbar {
  align-items: center;
  height: 17px;
  padding: 0 4px;
}

.vbar svg,
.hbar svg {
  width: 9px;
  height: 9px;
  fill: none;
  stroke: #505050;
  stroke-width: 2;
}

.vbar .thumb {
  width: 15px;
  flex: 1;
  margin: 86px 0 4px;
  background-color: #cdcdcd;
}

.hbar .track {
  flex: 1;
  margin: 0 5px;
}

.hbar .thumb {
  width: 79%;
  height: 15px;
  background-color: #cdcdcd;
}

.project .hbar {
  padding: 0 22px 0 6px;
}

/* trees */
.tree li {
  position: relative;
}

.tree ul {
  margin-left: 19px;
}

.tree li > div {
  display: flex;
  align-items: center;
  height: 22px;
}

.tree li > div > svg {
  flex: none;
  margin: 0;
}

.tree li > div > span {
  margin-left: 3px;
  padding: 0 2px;
  white-space: nowrap;
}

.project .tree .sel {
  padding: 3px 2px;
}

.tree .sel {
  background-color: #ececec;
}

.tree b {
  position: relative;
  flex: none;
  width: 19px;
  height: 9px;
}

.tree b::before {
  content: "";
  position: absolute;
  top: 5px;
  left: 9px;
  right: 0;
  border-top: 1px dotted #808080;
}

.tree li::before {
  content: "";
  position: absolute;
  top: 0;
  bottom: 0;
  left: 9px;
  border-left: 1px dotted #808080;
}

.tree li:last-child::before {
  bottom: auto;
  height: 12px;
}

.tree .plus::after,
.tree .minus::after {
  content: "";
  position: absolute;
  top: 0;
  left: 5px;
  width: 9px;
  height: 9px;
  border: 1px solid #808080;
  background: linear-gradient(#000, #000) center / 5px 1px no-repeat #fff;
}

.tree .plus::after {
  background: linear-gradient(#000, #000) center / 5px 1px no-repeat, linear-gradient(#000, #000) center / 1px 5px no-repeat #fff;
}

.model-tree {
  display: flex;
  flex-direction: column;
  width: 104px;
  margin-bottom: 3px;
  overflow: hidden;
  border: 1px solid #fff;
  border-top: 2px solid #696969;
  border-left: 2px solid #696969;
  background-color: #fff;
}

.model-tree .tree {
  flex: 1;
  margin-left: -46px;
}

.model-tree .tree li > div {
  height: 20px;
}

.model-tree .thumb {
  width: 42px;
  margin-left: auto;
  margin-right: 4px;
}

/* 3D view */
.view {
  position: relative;
  flex: 1;
  min-width: 0;
  margin-left: 3px;
  margin-bottom: 3px;
  border-top: 2px solid #696969;
  border-left: 2px solid #696969;
  background-color: #fff;
}

.scene {
  display: block;
  width: 100%;
  height: 100%;
  font: 12px "Liberation Sans", sans-serif;
}

.front {
  fill: #747474;
}

.side {
  fill: #595959;
}

.edge,
.coil {
  stroke: #36366e;
  shape-rendering: crispEdges;
}

.coil {
  stroke: #c0c000;
}

.edge:not(.front):not(.side),
.coil:not(.front) {
  fill: none;
}

.legend {
  position: absolute;
  top: 7px;
  left: 6px;
  width: 136px;
  padding: 4px 4px 2px 7px;
  border: 1px solid #000;
  background-color: #fff;
  font-family: "Liberation Mono", monospace;
}

.legend h3 {
  font-size: 13px;
  font-weight: bold;
  line-height: 20px;
}

.scale {
  display: flex;
  justify-content: space-between;
  height: 280px;
}

.swatches,
.scale ol {
  display: flex;
  flex-direction: column;
}

.swatches {
  width: 35px;
  margin: 8px 0;
}

.swatches i,
.scale li {
  flex: 1;
}

.scale li {
  font-size: 12px;
  text-align: right;
}

/* bottom docks */
.docks {
  display: flex;
  height: 78px;
  padding: 3px 1px 2px 3px;
  border-top: 2px solid #808080;
  border-bottom: 1px solid #a0a0a0;
}

.dock {
  display: flex;
  gap: 2px;
}

.dock:first-child {
  width: calc(50% + 5px);
  padding-right: 7px;
  border-right: 2px solid #a0a0a0;
  margin-right: 2px;
}

.dock:last-child {
  flex: 1;
}

.dock h2 {
  display: flex;
  flex-direction: column;
  align-items: center;
  width: 13px;
  border: 1px solid #a0a0a0;
  border-radius: 2px;
}

.dock h2 button {
  height: 13px;
  font: bold 8px "DejaVu Sans", sans-serif;
}

.dock h2 span {
  margin-top: auto;
  font-size: 10px;
  line-height: 11px;
  writing-mode: vertical-rl;
  transform: rotate(180deg);
}

.messages,
.progress {
  flex: 1;
  border: 1px solid #828790;
  background-color: #fff;
}

.progress {
  border: 2px solid #696969;
  border-right-color: #e8e8e8;
  border-bottom-color: #e8e8e8;
}

.messages .tree {
  padding-top: 1px;
  font: 10px/14px "Liberation Mono", "Noto Sans CJK SC", monospace;
}

.messages .tree li > div {
  height: 16px;
}

.messages .tree li > div > span {
  margin-left: 4px;
  padding-top: 1px;
}

.messages .info svg {
  margin-left: 19px;
}

/* status bar */
footer {
  display: flex;
  align-items: center;
  gap: 3px;
  height: 24px;
  padding: 2px 0 0 2px;
  border-bottom: 3px solid #222;
  font: 13px/16px "Open Sans", sans-serif;
}

footer span {
  flex: 1;
}

.cell {
  width: 28px;
  height: 17px;
  border: 1px solid #a0a0a0;
  border-right-color: #fff;
  border-bottom-color: #fff;
  line-height: 15px;
  text-align: center;
}

.cell.num {
  width: 36px;
}

.cell.last {
  width: 34px;
}
```
